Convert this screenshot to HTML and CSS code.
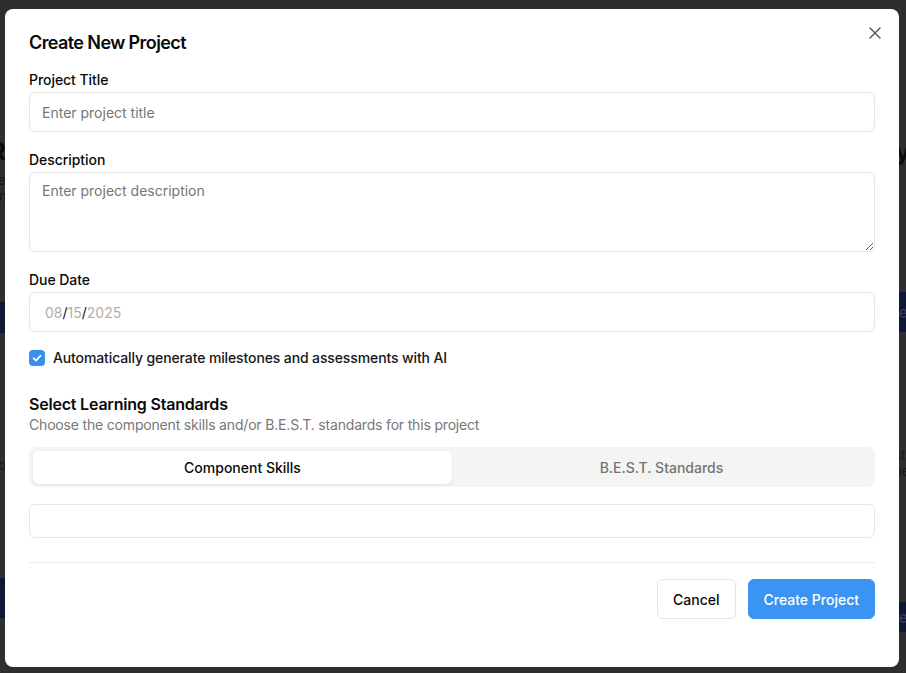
FILE: index.html
```html
<!DOCTYPE html>
<html lang="en">
<head>
<meta charset="utf-8">
<title>Create New Project</title>
<link rel="stylesheet" href="styles.css">
</head>
<body>
<div class="page">
  <div class="page-col page-left">
    <h2 class="bg-heading">Recent Projects</h2>
    <p class="bg-text">itemised list of<br>ongoing work</p>
    <div class="bg-btn"></div>
    <p class="bg-text bg-gap1">complete</p>
    <div class="bg-btn bg-btn2"></div>
  </div>
  <div class="page-col page-right">
    <h2 class="bg-heading">Activity</h2>
    <div class="bg-btn bg-btn3"><span>Create</span></div>
    <p class="bg-text bg-gap2">rest<br>type</p>
    <div class="bg-btn bg-btn4"><span>Create</span></div>
  </div>
</div>

<div class="overlay">
  <div class="modal" role="dialog" aria-labelledby="dlg-title">
    <button class="close" type="button" aria-label="Close">
      <svg width="16" height="16" viewBox="0 0 16 16" fill="none" stroke="#5c5c5c" stroke-width="1.5" stroke-linecap="round"><path d="M3 3L13 13M13 3L3 13"/></svg>
    </button>
    <h1 class="title" id="dlg-title">Create New Project</h1>

    <label class="label first" for="pt">Project Title</label>
    <input class="input" id="pt" type="text" placeholder="Enter project title">

    <label class="label" for="pd">Description</label>
    <textarea class="input textarea" id="pd" placeholder="Enter project description"></textarea>

    <label class="label">Due Date</label>
    <div class="input date"><span class="seg">08</span><span class="slash">/</span><span class="seg">15</span><span class="slash">/</span><span class="seg">2025</span></div>

    <div class="check-row">
      <span class="checkbox">
        <svg width="12" height="12" viewBox="0 0 12 12" fill="none" stroke="#fff" stroke-width="1.6" stroke-linecap="round" stroke-linejoin="round"><path d="M2.5 6.2L5 8.6L9.6 3.6"/></svg>
      </span>
      <span class="check-label">Automatically generate milestones and assessments with AI</span>
    </div>

    <h3 class="section-title">Select Learning Standards</h3>
    <p class="section-sub">Choose the component skills and/or B.E.S.T. standards for this project</p>

    <div class="tabs">
      <div class="tab active">Component Skills</div>
      <div class="tab">B.E.S.T. Standards</div>
    </div>

    <div class="empty-box"></div>

    <div class="separator"></div>

    <div class="actions">
      <button class="btn btn-outline" type="button">Cancel</button>
      <button class="btn btn-primary" type="button">Create Project</button>
    </div>
  </div>
</div>
</body>
</html>
```

FILE: styles.css
```css
* { box-sizing: border-box; }

html, body {
  margin: 0;
  padding: 0;
  width: 906px;
  height: 673px;
  overflow: hidden;
}

body {
  background: #2e2e2e;
  font-family: Inter, "Noto Sans", sans-serif;
  color: #0a0a0a;
}

/* dimmed page behind the dialog */
.page {
  display: grid;
  grid-template-columns: 1fr 1fr;
  height: 673px;
}

.page-col {
  padding-top: 138px;
  display: flex;
  flex-direction: column;
}

.page-left { margin-left: -10px; }
.page-right { align-items: flex-end; margin-right: -4px; }

.bg-heading {
  margin: 0;
  font-size: 24px;
  line-height: 28px;
  font-weight: 700;
  color: #0c0c0c;
}

.bg-text {
  margin: 6px 0 0;
  font-size: 14px;
  line-height: 16px;
  color: #161616;
}

.bg-btn {
  width: 140px;
  height: 31px;
  margin-top: 98px;
  background: #0e1733;
  border-radius: 4px;
  color: #3a4159;
  font-size: 16px;
  display: flex;
  align-items: center;
  justify-content: flex-end;
  padding-right: 2px;
}

.bg-gap1 { margin-top: 124px; }
.bg-btn2 { margin-top: 105px; height: 40px; }
.bg-btn3 { margin-top: 126px; height: 40px; }
.bg-gap2 { margin-top: 115px; }
.bg-btn4 { margin-top: 123px; height: 30px; }

/* overlay + dialog */
.overlay {
  position: fixed;
  inset: 0;
  padding: 9px 0 0 5px;
}

.modal {
  position: relative;
  width: 894px;
  height: 658px;
  background: #ffffff;
  border-radius: 8px;
  padding: 19px 24px 24px;
  display: flex;
  flex-direction: column;
}

.close {
  position: absolute;
  top: 16px;
  right: 16px;
  width: 16px;
  height: 16px;
  padding: 0;
  border: 0;
  background: transparent;
  display: flex;
}

.title {
  margin: 0;
  font-size: 18px;
  line-height: 29px;
  font-weight: 600;
  letter-spacing: -0.6px;
}

.label {
  display: block;
  margin-top: 18px;
  margin-bottom: 2px;
  font-size: 14px;
  line-height: 20px;
  font-weight: 500;
  letter-spacing: -0.05px;
}

.label.first { margin-top: 13px; }

.input {
  display: block;
  width: 100%;
  height: 40px;
  border: 1px solid #e7e7e7;
  border-radius: 6px;
  padding: 0 12px;
  font-family: inherit;
  font-size: 14px;
  color: #0a0a0a;
  background: #fff;
  outline: none;
}

.input::placeholder { color: #767676; }

.textarea {
  height: 80px;
  padding: 8px 12px;
  line-height: 20px;
  resize: vertical;
}

.date {
  display: flex;
  align-items: center;
  padding-left: 15px;
  font-size: 14px;
}

.seg { color: #b8aca6; }
.slash { color: #111; }

.check-row {
  margin-top: 15px;
  height: 21px;
  display: flex;
  align-items: center;
  gap: 8px;
}

.checkbox {
  width: 16px;
  height: 16px;
  border-radius: 4px;
  background: #3a8ef2;
  display: flex;
  align-items: center;
  justify-content: center;
}

.check-label {
  font-size: 14px;
  line-height: 20px;
  font-weight: 500;
  color: #161616;
  letter-spacing: -0.12px;
}

.section-title {
  margin: 25px 0 0;
  font-size: 16px;
  line-height: 22px;
  font-weight: 600;
  letter-spacing: -0.2px;
}

.section-sub {
  margin: 0;
  font-size: 14px;
  line-height: 20px;
  color: #777;
  letter-spacing: -0.18px;
}

.tabs {
  margin-top: 12px;
  height: 40px;
  padding: 4px 4px 3px;
  background: #f4f4f3;
  border-radius: 8px;
  display: grid;
  grid-template-columns: 1fr 1fr;
}

.tab {
  display: flex;
  align-items: center;
  justify-content: center;
  font-size: 14px;
  font-weight: 500;
  color: #747474;
  border-radius: 6px;
}

.tab.active {
  background: #fff;
  color: #0a0a0a;
  box-shadow: 0 1px 3px rgba(0, 0, 0, 0.08);
}

.empty-box {
  margin-top: 17px;
  height: 34px;
  border: 1px solid #e7e7e7;
  border-radius: 6px;
}

.separator {
  margin-top: 24px;
  height: 1px;
  background: #ececec;
}

.actions {
  margin-top: 16px;
  display: flex;
  justify-content: flex-end;
  gap: 12px;
}

.btn {
  height: 40px;
  padding: 0 15px;
  border-radius: 6px;
  font-family: inherit;
  font-size: 14px;
  font-weight: 500;
  cursor: pointer;
}

.btn-outline {
  background: #fff;
  border: 1px solid #e5e5e5;
  color: #0a0a0a;
}

.btn-primary {
  background: #3a95f2;
  border: 1px solid #3a95f2;
  color: #fff;
}
```
